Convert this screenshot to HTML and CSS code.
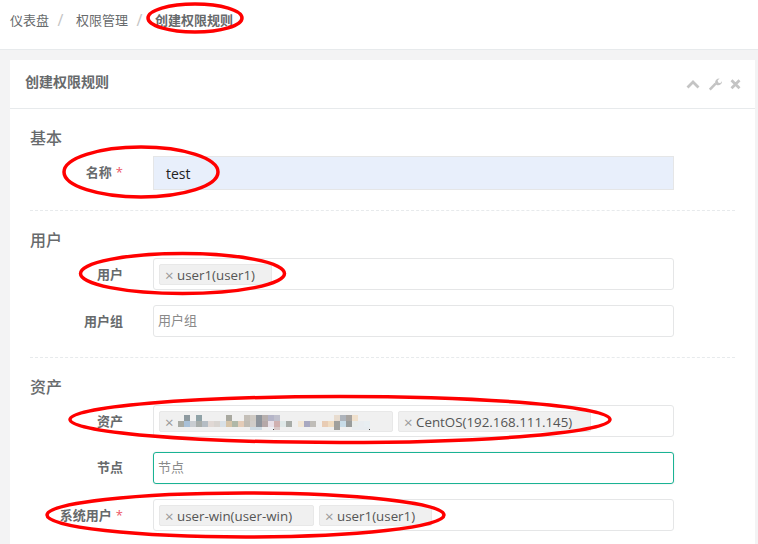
FILE: index.html
```html
<!DOCTYPE html>
<html lang="zh">
<head>
<meta charset="utf-8">
<title>创建权限规则</title>
<link rel="stylesheet" href="styles.css">
</head>
<body>
<nav class="crumbs">
  <span>仪表盘</span><i class="sep">/</i><span>权限管理</span><i class="sep">/</i><strong>创建权限规则</strong>
</nav>
<main class="page">
  <section class="card">
    <header class="card-head">
      <h5>创建权限规则</h5>
      <div class="tools">
        <svg class="tool" width="14" height="14" viewBox="0 0 14 14"><path d="M1.500 10.500 7 5l5.500 5.500" fill="none" stroke="#c4c4c4" stroke-width="2.800"/></svg>
        <svg class="tool" width="14" height="14" viewBox="0 0 14 14"><path d="M1.800 12.600 7.600 6.600" fill="none" stroke="#c4c4c4" stroke-width="2.600"/><path d="M7.200 6.800C6.600 3.800 8.500 1.400 11.600 1.600L9.600 3.600l.6 2 2 .6 1.800-2C14.200 7 11.500 9 8.600 8z" fill="#c4c4c4"/></svg>
        <svg class="tool" width="11" height="14" viewBox="0 0 11 14"><path d="M1.500 3.200 9.500 11.200M9.500 3.200 1.500 11.200" fill="none" stroke="#c4c4c4" stroke-width="2.800"/></svg>
      </div>
    </header>
    <form class="card-body">
      <h3>基本</h3>
      <div class="row raised">
        <label>名称<b class="req">*</b></label>
        <div class="field filled">test</div>
      </div>
      <hr>
      <h3>用户</h3>
      <div class="rows">
        <div class="row">
          <label>用户</label>
          <div class="field tags"><span class="tag tag-user"><i>×</i>user1(user1)</span></div>
        </div>
        <div class="row">
          <label>用户组</label>
          <div class="field ph">用户组</div>
        </div>
      </div>
      <hr>
      <h3>资产</h3>
      <div class="rows">
        <div class="row">
          <label>资产</label>
          <div class="field tags">
            <span class="tag"><i>×</i><svg class="mosaic" width="197" height="19" viewBox="0 0 197 19" aria-hidden="true">
              <rect x="7" y="3" width="6" height="6" fill="#8e9aa0"/><rect x="19" y="3" width="6" height="6" fill="#90a3a8"/><rect x="49" y="3" width="6" height="6" fill="#a9a9a0"/><rect x="67" y="3" width="6" height="6" fill="#c4bfb8"/><rect x="73" y="3" width="6" height="6" fill="#cfcac4"/><rect x="79" y="3" width="6" height="6" fill="#8f959c"/><rect x="85" y="3" width="6" height="6" fill="#b8b0ae"/><rect x="91" y="3" width="6" height="6" fill="#b5b5c8"/><rect x="97" y="3" width="6" height="6" fill="#c0c0cc"/><rect x="157" y="3" width="6" height="6" fill="#e8dccf"/><rect x="163" y="3" width="6" height="6" fill="#aeb4bc"/><rect x="169" y="3" width="6" height="6" fill="#a8a4a0"/><rect x="175" y="3" width="6" height="6" fill="#f0e0cc"/>
              <rect x="1" y="9" width="6" height="6" fill="#a9aba4"/><rect x="7" y="9" width="6" height="6" fill="#a8c0d8"/><rect x="13" y="9" width="6" height="6" fill="#c8ccd0"/><rect x="19" y="9" width="6" height="6" fill="#a8adaa"/><rect x="25" y="9" width="6" height="6" fill="#b5bdc4"/><rect x="31" y="9" width="6" height="6" fill="#e0d8d4"/><rect x="37" y="9" width="6" height="6" fill="#d8d4d0"/><rect x="43" y="9" width="6" height="6" fill="#d8e0e6"/><rect x="49" y="9" width="6" height="6" fill="#d6c4a8"/><rect x="55" y="9" width="6" height="6" fill="#b0b8a8"/><rect x="61" y="9" width="6" height="6" fill="#e4ccb8"/><rect x="67" y="9" width="6" height="6" fill="#c0bcb4"/><rect x="73" y="9" width="6" height="6" fill="#d0ccc8"/><rect x="79" y="9" width="6" height="6" fill="#8e949c"/><rect x="85" y="9" width="6" height="6" fill="#b5a8a8"/><rect x="91" y="9" width="6" height="6" fill="#e8e0e8"/><rect x="97" y="9" width="6" height="6" fill="#d0b0b0"/><rect x="103" y="9" width="6" height="6" fill="#dfe8e8"/><rect x="109" y="9" width="6" height="6" fill="#a8aca8"/><rect x="121" y="9" width="6" height="6" fill="#f2e6d4"/><rect x="127" y="9" width="6" height="6" fill="#a8a8c0"/><rect x="133" y="9" width="6" height="6" fill="#c0bdb8"/><rect x="145" y="9" width="6" height="6" fill="#e8ccb4"/><rect x="151" y="9" width="6" height="6" fill="#f0dcc0"/><rect x="157" y="9" width="6" height="6" fill="#a0a09c"/><rect x="163" y="9" width="6" height="6" fill="#c8dce8"/><rect x="169" y="9" width="6" height="6" fill="#989c9c"/><rect x="175" y="9" width="6" height="6" fill="#e8ecec"/><rect x="181" y="9" width="6" height="6" fill="#e8ecf0"/><rect x="187" y="9" width="6" height="6" fill="#e8eef2"/>
              <rect x="73" y="15" width="12" height="3" fill="#d0dce4"/><rect x="91" y="15" width="6" height="3" fill="#eef0f4"/><rect x="97" y="15" width="6" height="3" fill="#d8c8c8"/><rect x="157" y="15" width="6" height="3" fill="#a0a09c"/><rect x="175" y="15" width="18" height="3" fill="#e8ecf0"/><rect x="96" y="17" width="1" height="1" fill="#444"/><rect x="192" y="17" width="1" height="1" fill="#444"/>
            </svg></span>
            <span class="tag"><i>×</i>CentOS(192.168.111.145)</span>
          </div>
        </div>
        <div class="row raised">
          <label>节点</label>
          <div class="field ph focus">节点</div>
        </div>
        <div class="row">
          <label>系统用户<b class="req">*</b></label>
          <div class="field tags"><span class="tag tag-win"><i>×</i>user-win(user-win)</span><span class="tag tag-user"><i>×</i>user1(user1)</span></div>
        </div>
      </div>
    </form>
  </section>
</main>
<svg class="marks" width="758" height="544" viewBox="0 0 758 544" aria-hidden="true">
  <ellipse cx="195" cy="18" rx="47" ry="14"/>
  <ellipse cx="141" cy="172" rx="77" ry="25"/>
  <ellipse cx="182.500" cy="273.500" rx="102" ry="20"/>
  <ellipse cx="340" cy="419.500" rx="270" ry="23"/>
  <ellipse cx="245.500" cy="515" rx="198.500" ry="22"/>
</svg>
</body>
</html>
```
FILE: styles.css
```css
* { box-sizing: border-box; }
html, body { margin: 0; height: 544px; overflow: hidden; }
body {
  position: relative;
  background: #f3f3f4;
  color: #676a6c;
  font: 13px/18px "Open Sans", "Noto Sans CJK SC", sans-serif;
}
.crumbs {
  height: 50px;
  padding: 11px 10px 0;
  background: #fff;
  border-bottom: 1px solid #e7eaec;
  display: flex;
  align-items: flex-start;
}
.crumbs strong { font-weight: 700; }
.sep {
  width: 27px;
  padding-right: 4px;
  font-size: 16px;
  font-style: normal;
  color: #c4c4c4;
  text-align: center;
}
.page { padding: 10px 3px 0 10px; }
.card { background: #fff; }
.card-head {
  height: 49px;
  padding: 0 14px 0 15px;
  border-bottom: 1px solid #e7eaec;
  display: flex;
  align-items: center;
  justify-content: space-between;
}
.card-head h5 { margin: 0 0 4px; font-size: 14px; font-weight: 700; line-height: 24px; }
.tools { display: flex; align-items: center; gap: 8px; }
.tool { display: block; }
.card-body { padding: 19px 20px 40px; }
h3 { margin: 0 0 8px; font-size: 16px; font-weight: 500; line-height: 20px; color: #676a6c; }
hr { border: 0; border-top: 1px dashed #e7eaec; margin: 20px 0 19px; }
.rows { display: flex; flex-direction: column; gap: 15px; }
.row { display: flex; align-items: center; gap: 30px; width: 644px; }
.raised label { margin-bottom: 2px; }
label { width: 93px; text-align: right; font-weight: 700; }
.req { color: #ed5565; margin-left: 4px; font-weight: 400; }
.field {
  flex: 1;
  height: 32px;
  border: 1px solid #e5e6e7;
  border-radius: 3px;
  background: #fff;
  padding: 0 4px;
  display: flex;
  align-items: center;
}
.filled {
  height: 34px;
  padding: 2px 12px 0;
  border-radius: 0;
  background: #e8effb;
  font-size: 14px;
  color: #222;
}
.ph { color: #8a8a8a; padding-bottom: 2px; }
.focus { border-color: #1ab394; box-shadow: 0 0 2px rgba(0, 0, 0, .12); }
.tags {
  gap: 5px;
  align-items: flex-start;
  padding: 5px 5px 0;
  color: #555;
  font-size: 13.33px;
}
.tag {
  height: 21px;
  padding: 0 18px 0 5px;
  display: flex;
  align-items: center;
  background: #f0f0f0;
  border: 1px solid #e8e8e8;
  border-radius: 2px;
}
.tag-user { padding-right: 16px; }
.tag-win { padding-right: 21px; }
.tag i { font-style: normal; font-size: 15px; color: #999; width: 12px; }
.mosaic { display: block; }
.marks { position: absolute; left: 0; top: 0; pointer-events: none; }
.marks ellipse { fill: none; stroke: #f00; stroke-width: 3.5; }
```
